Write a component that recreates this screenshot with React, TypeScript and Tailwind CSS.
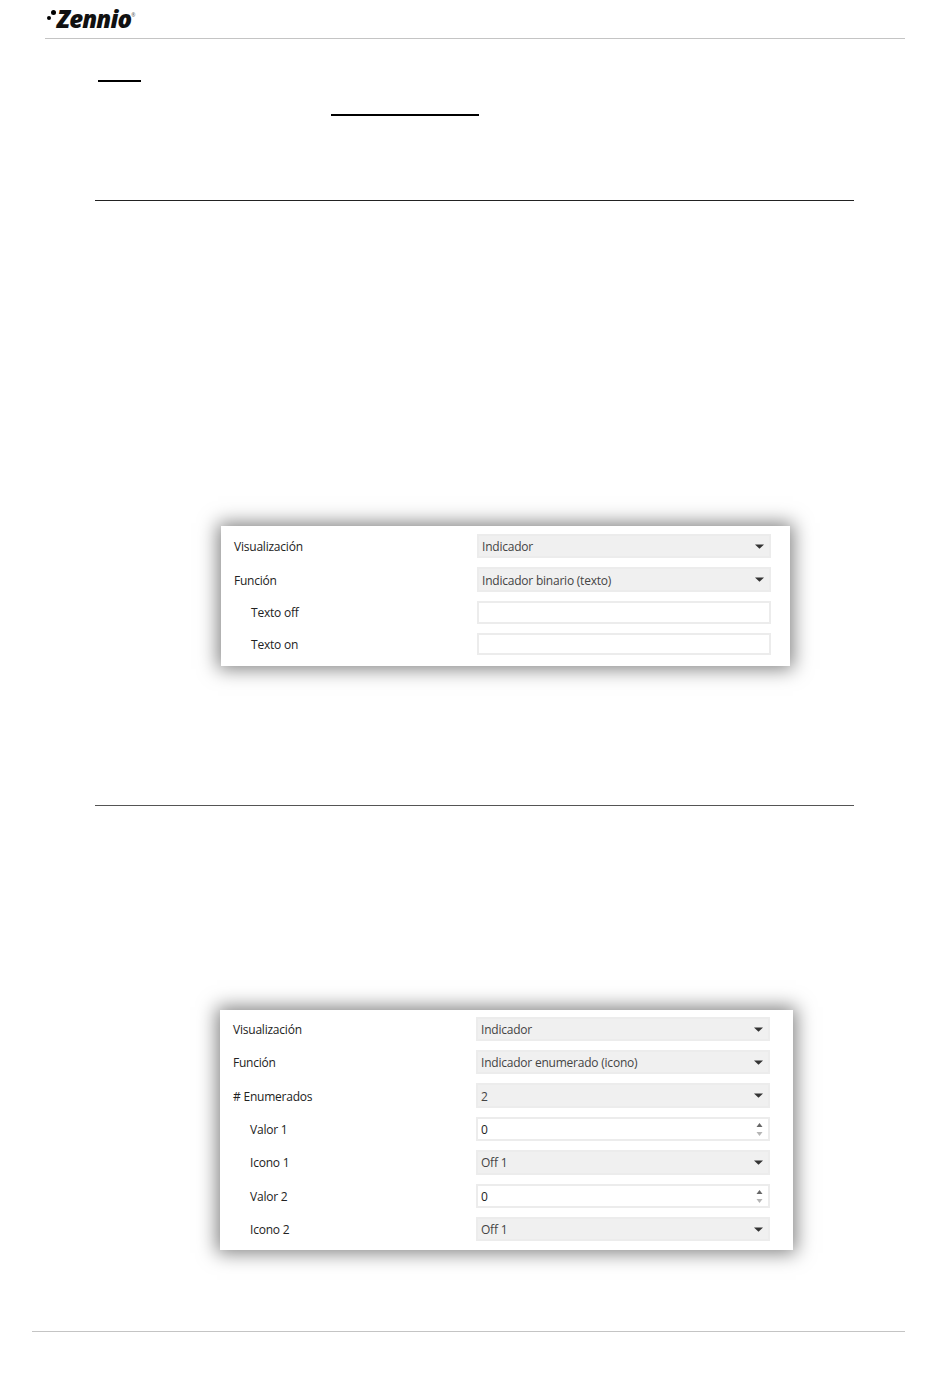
const font = { fontFamily: '"Open Sans", "Noto Sans", sans-serif' };

function Caret() {
  return (
    <svg width="9" height="5" viewBox="0 0 9 5" className="shrink-0">
      <path d="M0 0.5H9L4.5 4.8Z" fill="#333333" />
    </svg>
  );
}

function Spinner() {
  return (
    <svg width="7" height="15" viewBox="0 0 7 15" className="shrink-0">
      <path d="M3.5 1L6.5 5H0.5Z" fill="#666666" />
      <path d="M0.5 10H6.5L3.5 14Z" fill="#b5b5b5" />
    </svg>
  );
}

type Row = { label: string; kind: "select" | "input" | "number"; value?: string; indent?: boolean; flat?: boolean; h: number; gap: number };

function Field({ row }: { row: Row }) {
  const isSelect = row.kind === "select";
  return (
    <div
      className={`w-[294px] flex items-center justify-between pl-[3px] pr-[5px] border-2 border-[#ececec] text-[12px] tracking-[-0.22px] leading-none ${
        isSelect ? "bg-[#f0f0f0] text-[#444444]" : "bg-white text-[#222222]"
      }`}
      style={{ height: row.h }}
    >
      <span className={row.flat ? "" : "translate-y-px"}>{row.value ?? ""}</span>
      {row.kind === "select" && <Caret />}
      {row.kind === "number" && <Spinner />}
    </div>
  );
}

function Panel({ rows, width, pr, pt, pb, labelW }: { rows: Row[]; width: string; pr: string; pt: string; pb: string; labelW: string }) {
  return (
    <div className={`bg-white shadow-[0_0_18px_3px_rgba(0,0,0,0.5)] flex flex-col items-end ${width} ${pr} ${pt} ${pb}`}>
      {rows.map((r) => (
        <div key={r.label} className="flex items-center w-full" style={{ marginBottom: r.gap }}>
          <span className={`text-[12px] tracking-[-0.22px] leading-none text-[#222222] pl-[13px] ${r.flat ? "" : "translate-y-px"} ${labelW} ${r.indent ? "indent-[17px]" : ""}`}>{r.label}</span>
          <Field row={r} />
        </div>
      ))}
    </div>
  );
}

const rowsA: Row[] = [
  { label: "Visualización", kind: "select", value: "Indicador", h: 24, gap: 9 },
  { label: "Función", kind: "select", value: "Indicador binario (texto)", h: 25, gap: 9 },
  { label: "Texto off", kind: "input", indent: true, flat: true, h: 23, gap: 9 },
  { label: "Texto on", kind: "input", indent: true, h: 22, gap: 0 },
];

const rowsB: Row[] = [
  { label: "Visualización", kind: "select", value: "Indicador", h: 24, gap: 9 },
  { label: "Función", kind: "select", value: "Indicador enumerado (icono)", h: 24, gap: 9 },
  { label: "# Enumerados", kind: "select", value: "2", h: 25, gap: 9 },
  { label: "Valor 1", kind: "number", value: "0", indent: true, h: 24, gap: 9 },
  { label: "Icono 1", kind: "select", value: "Off 1", indent: true, flat: true, h: 25, gap: 9 },
  { label: "Valor 2", kind: "number", value: "0", indent: true, h: 24, gap: 9 },
  { label: "Icono 2", kind: "select", value: "Off 1", indent: true, h: 24, gap: 0 },
];

export default function App() {
  return (
    <div className="w-[950px] h-[1387px] bg-white flex flex-col overflow-hidden" style={font}>
      <header className="relative mx-[45px] h-[39px] border-b border-[#c4c4c4] flex items-start">
        <span className="absolute left-[2px] top-[16px] w-[4px] h-[4px] rounded-full bg-black" />
        <span className="absolute left-[6px] top-[10px] w-[5px] h-[5px] rounded-full bg-black" />
        <span className="ml-[12px] mt-[4px] text-[24px] leading-[30px] font-extrabold italic tracking-[-0.8px] text-[#111111]">Zennio</span>
        <span className="text-[5px] leading-none mt-[13px] text-[#555555]">®</span>
      </header>

      <div className="ml-[98px] mt-[41px] w-[43px] h-[2px] bg-black" />
      <div className="ml-[331px] mt-[32px] w-[148px] h-[2px] bg-black" />
      <div className="ml-[95px] mt-[84px] w-[759px] h-px bg-[#222222]" />

      <div className="ml-[221px] mt-[325px]">
        <Panel rows={rowsA} width="w-[569px]" pr="pr-[19px]" pt="pt-[8px]" pb="pb-[11px]" labelW="w-[256px]" />
      </div>

      <div className="ml-[95px] mt-[139px] w-[759px] h-px bg-[#555555]" />

      <div className="ml-[220px] mt-[204px]">
        <Panel rows={rowsB} width="w-[573px]" pr="pr-[23px]" pt="pt-[7px]" pb="pb-[9px]" labelW="w-[256px]" />
      </div>

      <div className="ml-[32px] mt-[81px] w-[873px] h-px bg-[#c4c4c4]" />
    </div>
  );
}
